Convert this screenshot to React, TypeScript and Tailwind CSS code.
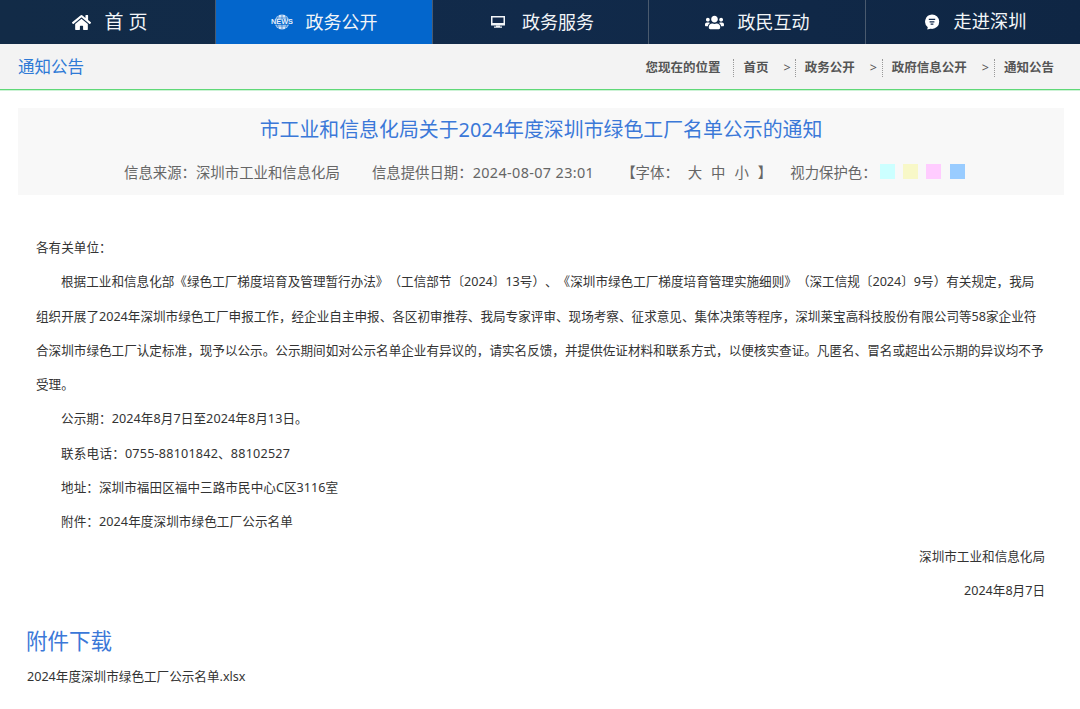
import React from "react";
import { FaHome, FaUsers } from "react-icons/fa";

const FONT = "font-['Noto_Sans','Noto_Sans_CJK_SC',sans-serif] [text-spacing-trim:space-all]";

function NewsIcon() {
  return (
    <svg width="22" height="16" viewBox="0 0 22 16" fill="none">
      <circle cx="11" cy="8" r="7.5" fill="#d5e4f6" />
      <path d="M4 4h14M4 12h14M11 .5v15M7.5 1.2c-1.6 4-1.6 9.600 0 13.600M14.500 1.200c1.600 4 1.600 9.600 0 13.600" stroke="#0366cc" strokeWidth="0.6" />
      <rect x="0" y="5.200" width="22" height="5.600" fill="#0366cc" />
      <text x="0" y="10.300" textLength="22" lengthAdjust="spacingAndGlyphs" fontSize="6.500" fontWeight="700" fill="#e6effa" fontFamily="Liberation Sans, sans-serif">NEWS</text>
    </svg>
  );
}

function MonitorIcon() {
  return (
    <svg width="14" height="12" viewBox="0 0 14 12">
      <path d="M0 0h14v9.500H0z" fill="#f2f5f8" />
      <path d="M1.500 1.500h11v5.500h-11z" fill="#12294a" />
      <path d="M5 9.500h4v1H11v1.200H3v-1.200h2z" fill="#f2f5f8" />
    </svg>
  );
}

function ChatIcon() {
  return (
    <svg width="16" height="16" viewBox="0 0 16 16">
      <path d="M8 .5a7.200 7.200 0 0 1 7.200 7.200A7.200 7.200 0 0 1 8 14.900c-.5 0-1 0-1.400-.1L3.200 15.600l.6-2.300A7.200 7.200 0 0 1 8 .5z" fill="#fff" />
      <path d="M4.800 4.800h6.400V6H4.800zM5.600 7.200h4.800v1.200H5.600zM6.600 9.600h2.800v1.200H6.600z" fill="#12294a" />
    </svg>
  );
}

const navItems = [
  { label: "首 页", icon: <FaHome className="text-[19px] text-white" />, cls: "w-[216px] gap-[14px] pl-[4px]", text: "text-[19px]" },
  { label: "政务公开", icon: <NewsIcon />, cls: "w-[217px] gap-[13px] bg-[#0366cc]", text: "text-[18px]" },
  { label: "政务服务", icon: <MonitorIcon />, cls: "w-[216px] gap-[17px] pl-[4px]", text: "text-[18px]" },
  { label: "政民互动", icon: <FaUsers className="text-[19px] text-white" />, cls: "w-[217px] gap-[14px]", text: "text-[18px]" },
  { label: "走进深圳", icon: <ChatIcon />, cls: "flex-1 gap-[14px] pl-[4px]", text: "text-[18.2px]" },
];

const crumbs = ["首页", "政务公开", "政府信息公开", "通知公告"];
const swatches = ["bg-[#ccffff]", "bg-[#f8f8c8]", "bg-[#ffccff]", "bg-[#99ccff]"];

// digits run a little wider in the reference, so the short lines get a small tracking
const paragraphs = [
  { text: "公示期：2024年8月7日至2024年8月13日。", cls: "tracking-[0.08px]" },
  { text: "联系电话：0755-88101842、88102527", cls: "tracking-[0.2px]" },
  { text: "地址：深圳市福田区福中三路市民中心C区3116室", cls: "tracking-[0.05px]" },
  { text: "附件：2024年度深圳市绿色工厂公示名单", cls: "tracking-[0.08px]" },
];

const mainText =
  "根据工业和信息化部《绿色工厂梯度培育及管理暂行办法》（工信部节〔2024〕13号）、《深圳市绿色工厂梯度培育管理实施细则》（深工信规〔2024〕9号）有关规定，我局组织开展了2024年深圳市绿色工厂申报工作，经企业自主申报、各区初审推荐、我局专家评审、现场考察、征求意见、集体决策等程序，深圳莱宝高科技股份有限公司等58家企业符合深圳市绿色工厂认定标准，现予以公示。公示期间如对公示名单企业有异议的，请实名反馈，并提供佐证材料和联系方式，以便核实查证。凡匿名、冒名或超出公示期的异议均不予受理。";

export default function App() {
  return (
    <div className={`${FONT} h-[709px] w-[1080px] overflow-hidden bg-white`}>
      {/* nav */}
      <div className="flex h-[44px] bg-gradient-to-r from-[#122b47] via-[#112a4a] to-[#0f2644]">
        {navItems.map((item, i) => (
          <div
            key={item.label}
            className={`flex items-center justify-center ${item.cls} ${i < 4 ? "border-r border-[#4a5a6e]" : ""}`}
          >
            {item.icon}
            <span className={`${item.text} whitespace-pre text-[#f2f5f8]`}>{item.label}</span>
          </div>
        ))}
      </div>

      {/* sub bar */}
      <div className="flex h-[45px] items-center justify-between bg-[#f3f3f3] pl-[18px] pr-[26px]">
        <span className="mt-[2px] text-[16.5px] text-[#2e7ad6]">通知公告</span>
        <div className="mt-[2px] flex items-center text-[12.5px] font-bold leading-[18px] text-[#555]">
          <span className="mr-[13px]">您现在的位置</span>
          {crumbs.map((c, i) => (
            <React.Fragment key={c}>
              <span className="border-l border-dotted border-[#999] pl-[9px]">{c}</span>
              {i < 3 && <span className={`ml-[15px] font-normal ${i === 0 ? "mr-[4px]" : "mr-[5px]"}`}>&gt;</span>}
            </React.Fragment>
          ))}
        </div>
      </div>
      <div className="h-[1px] bg-[#5fd877]" />
      <div className="h-[1px] bg-[#cdf2d6]" />

      <div className="mx-[18px] mt-[17px] h-[87px] w-[1046px] bg-[#f8f8f8] pt-[7px] text-center">
        <h1 className="text-[19.9px] leading-[30px] text-[#3b78d8]">市工业和信息化局关于2024年度深圳市绿色工厂名单公示的通知</h1>
        <div className="ml-[106px] mt-[16px] flex items-center text-[14.4px] leading-[24px] text-[#666]">
          <span>信息来源：深圳市工业和信息化局</span>
          <span className="ml-[32px]">信息提供日期：</span>
          <span className="tracking-[0.37px]">2024-08-07 23:01</span>
          <span className="ml-[27px] whitespace-pre [word-spacing:0.75px]">【字体：  大  中  小  】</span>
          <span className="ml-[18px]">视力保护色：</span>
          <span className="mb-[4px] ml-[3px] flex gap-[8.4px]">
            {swatches.map((s) => (
              <span key={s} className={`h-[15px] w-[15px] ${s}`} />
            ))}
          </span>
        </div>
      </div>

      <div className="mt-[36px] pl-[36px] pr-[35px] text-[12.6px] leading-[34.3px] text-[#333]">
        <p>各有关单位：</p>
        <p className="indent-[25px]">{mainText}</p>
        {paragraphs.map((p) => (
          <p key={p.text} className={`indent-[25px] ${p.cls}`}>{p.text}</p>
        ))}
        <p className="text-right">深圳市工业和信息化局</p>
        <p className="text-right">2024年8月7日</p>
      </div>

      <div className="mt-[17px] px-[27px]">
        <h2 className="ml-[-1px] text-[21.5px] leading-[32px] text-[#3b78d8]">附件下载</h2>
        <p className="mt-[8px] text-[12.6px] leading-[24px] text-[#333]">2024年度深圳市绿色工厂公示名单.xlsx</p>
      </div>
    </div>
  );
}
